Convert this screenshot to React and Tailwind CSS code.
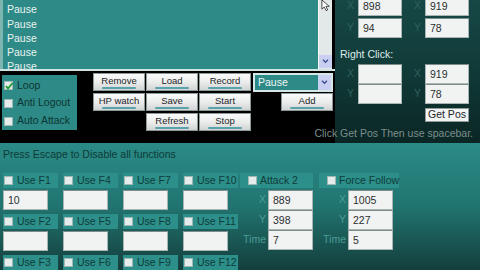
import React from "react";

const listItems = ["Pause", "Pause", "Pause", "Pause", "Pause", "Pause"];

function Box({ checked = false, className = "" }) {
  return (
    <span
      className={
        "relative inline-block h-[9px] w-[9px] shrink-0 border border-[#9fb8b6] bg-[#e4ecec] " +
        className
      }
    >
      {checked && (
        <svg viewBox="0 0 10 10" className="absolute -left-[1px] -top-[1px] h-[10px] w-[10px]">
          <path d="M2 5 L4 7.5 L8.5 2" fill="none" stroke="#1f9a2e" strokeWidth="1.8" />
        </svg>
      )}
    </span>
  );
}

function Btn({ label, className = "" }) {
  return (
    <div
      className={
        "relative flex h-[18px] items-start justify-center border border-[#8d9999] bg-linear-to-b from-[#fbfbfb] via-[#ebecec] to-[#d2d5d5] pt-[2px] text-[9.5px] leading-[10px] text-[#1d2626] " +
        className
      }
    >
      {label}
      <span className="absolute bottom-[1px] left-[8px] right-[8px] h-[2px] rounded-full bg-[#5aa3ab]" />
    </div>
  );
}

function Field({ value = "", className = "" }) {
  return (
    <div
      className={
        "h-[20px] w-[44px] shrink-0 border border-[#a9b4b4] border-t-[#7f8c8c] bg-[#f1f3f3] pl-[4px] text-[10.5px] leading-[18px] text-[#2b2f2f] " +
        className
      }
    >
      {value}
    </div>
  );
}

function FLabel({ label }) {
  return (
    <div className="flex h-[15px] items-center gap-[4px] bg-[#2c8f8a] pl-[1px] text-[10.5px] text-[#0f3d3b]">
      <Box />
      <span>{label}</span>
    </div>
  );
}

function FCol({ keys, values }) {
  return (
    <div className="flex w-[55px] flex-col">
      <FLabel label={keys[0]} />
      <Field value={values[0]} className="mt-[2px] w-[45px]" />
      <div className="mt-[4px]">
        <FLabel label={keys[1]} />
      </div>
      <Field value={values[1]} className="mt-[2px] w-[45px]" />
      <div className="mt-[4px]">
        <FLabel label={keys[2]} />
      </div>
    </div>
  );
}

function CoordGroup({ title, x, y, time, labelW }) {
  return (
    <div className="flex flex-col">
      <div className="flex h-[15px] items-center gap-[3px] bg-[#2c8f8a] pl-[8px] text-[10.5px] text-[#0f3d3b]">
        <Box />
        <span>{title}</span>
      </div>
      <div className="mt-[2px] flex flex-col">
        {[
          ["X", x],
          ["Y", y],
          ["Time", time],
        ].map(([l, v]) => (
          <div key={l} className="flex items-center">
            <span
              className="pr-[2px] text-right text-[10.5px] text-[#4b9c97]"
              style={{ width: labelW }}
            >
              {l}
            </span>
            <Field value={v} className="w-[45px]" />
          </div>
        ))}
      </div>
    </div>
  );
}

export default function App() {
  return (
    <div className="flex h-[270px] w-[480px] flex-col overflow-hidden bg-black font-['Liberation_Sans',Arial,sans-serif]">
      {/* top half */}
      <div className="flex h-[143px] shrink-0">
        {/* left column */}
        <div className="flex w-[335px] shrink-0 flex-col">
          {/* list box */}
          <div className="relative flex h-[71px] border-b-2 border-[#cfe3e1]">
            <div className="w-[318px] overflow-hidden border-l-[3px] border-[#7db5b1] bg-[#2e8a86] pl-[4px]">
              <div className="-mt-[12px] text-[10.5px] leading-[14.3px] text-[#e9f3f2]">
                {listItems.map((t, i) => (
                  <div key={i}>{t}</div>
                ))}
              </div>
            </div>
            <div className="flex w-[14px] flex-col justify-end border-l border-[#f6f8f8] bg-[#e3e8e8] pb-[1px]">
              <div className="flex h-[13px] items-center justify-center bg-[#c9cff0]">
                <svg viewBox="0 0 8 6" className="h-[5px] w-[7px]">
                  <path d="M1 1 L4 4 L7 1" fill="none" stroke="#3d4f93" strokeWidth="1.6" />
                </svg>
              </div>
            </div>
            <svg viewBox="0 0 12 14" className="absolute left-[321px] -top-[1px] h-[13px] w-[11px]">
              <path d="M1 1 L1 11 L3.6 8.6 L5.6 12.6 L7.3 11.8 L5.4 7.9 L9 7.9 Z" fill="#ffffff" stroke="#2a2a2a" strokeWidth="0.9" />
            </svg>
          </div>

          {/* controls */}
          <div className="mt-[2px] flex">
            <div className="ml-[2px] mt-[2px] flex h-[55px] w-[75px] flex-col bg-[#2e8a86] pl-[2px] pt-[2px] text-[10.5px] text-[#0c3634]">
              <div className="flex h-[17px] items-center gap-[4px]">
                <Box checked />
                <span>Loop</span>
              </div>
              <div className="flex h-[18px] items-center gap-[4px]">
                <Box />
                <span>Anti Logout</span>
              </div>
              <div className="flex h-[18px] items-center gap-[4px]">
                <Box />
                <span>Auto Attack</span>
              </div>
            </div>

            <div className="ml-[16px] grid grid-cols-[52px_52px_52px] gap-x-[1px] gap-y-[2px]">
              <Btn label="Remove" />
              <Btn label="Load" />
              <Btn label="Record" />
              <Btn label="HP watch" />
              <Btn label="Save" />
              <Btn label="Start" />
              <div />
              <Btn label="Refresh" />
              <Btn label="Stop" />
            </div>

            <div className="ml-[2px] flex w-[80px] flex-col">
              <div className="flex h-[19px] border-2 border-[#d6e6e5] bg-[#2e8a86]">
                <span className="flex-1 pl-[3px] text-[10.5px] leading-[15px] text-[#eef6f5]">
                  Pause
                </span>
                <span className="flex w-[13px] items-center justify-center bg-[#c9cff0]">
                  <svg viewBox="0 0 8 6" className="h-[5px] w-[7px]">
                    <path d="M1 1 L4 4 L7 1" fill="none" stroke="#3d4f93" strokeWidth="1.6" />
                  </svg>
                </span>
              </div>
              <Btn label="Add" className="ml-[28px] mt-[1px] w-[52px]" />
            </div>
          </div>
        </div>

        {/* right column */}
        <div className="flex w-[145px] min-w-0 shrink-0 flex-col bg-linear-to-b from-[#174846] via-[#103a38] to-[#0a2624]">
          <div className="-mt-[4px] flex flex-col gap-[2px]">
            {[
              ["X", "898", "X", "919"],
              ["Y", "94", "Y", "78"],
            ].map((r, i) => (
              <div key={i} className="flex items-center text-[10.5px] text-[#2f615e]">
                <span className="w-[23px] pr-[4px] text-right">{r[0]}</span>
                <Field value={r[1]} />
                <span className="w-[23px] pr-[4px] text-right">{r[2]}</span>
                <Field value={r[3]} />
              </div>
            ))}
          </div>
          <div className="ml-[5px] mt-[9px] h-[14px] text-[10.5px] leading-[14px] text-[#dfeceb]">
            Right Click:
          </div>
          <div className="mt-[3px] flex flex-col">
            {[
              ["X", "", "X", "919"],
              ["Y", "", "Y", "78"],
            ].map((r, i) => (
              <div key={i} className="flex items-center text-[10.5px] text-[#2f615e]">
                <span className="w-[23px] pr-[4px] text-right">{r[0]}</span>
                <Field value={r[1]} />
                <span className="w-[23px] pr-[4px] text-right">{r[2]}</span>
                <Field value={r[3]} />
              </div>
            ))}
          </div>
          <div className="ml-[90px] mt-[4px] flex h-[14px] w-[44px] items-center justify-center border border-[#8e9a9a] bg-[#f3f4f4] text-[10.5px] text-[#1f2626]">
            Get Pos
          </div>
          <div className="mt-[5px] flex justify-end pr-[7px]">
            <span className="shrink-0 whitespace-nowrap text-[10.5px] leading-[12px] text-[#7d8f8e]">
              Click Get Pos Then use spacebar.
            </span>
          </div>
        </div>
      </div>

      {/* bottom panel */}
      <div className="flex flex-1 flex-col bg-linear-to-b from-[#2b8b86] via-[#217470] to-[#133f3d] pl-[3px]">
        <div className="mt-[4px] h-[14px] text-[10.5px] leading-[14px] text-[#0e3b39]">
          Press Escape to Disable all functions
        </div>
        <div className="mt-[12px] flex">
          <div className="flex gap-[5px]">
            <FCol keys={["Use F1", "Use F2", "Use F3"]} values={["10", ""]} />
            <FCol keys={["Use F4", "Use F5", "Use F6"]} values={["", ""]} />
            <FCol keys={["Use F7", "Use F8", "Use F9"]} values={["", ""]} />
            <FCol keys={["Use F10", "Use F11", "Use F12"]} values={["", ""]} />
          </div>
          <div className="ml-[2px]">
            <CoordGroup title="Attack 2" x="889" y="398" time="7" labelW={28} />
          </div>
          <div className="ml-[6px]">
            <CoordGroup title="Force Follow" x="1005" y="227" time="5" labelW={29} />
          </div>
        </div>
      </div>
    </div>
  );
}
